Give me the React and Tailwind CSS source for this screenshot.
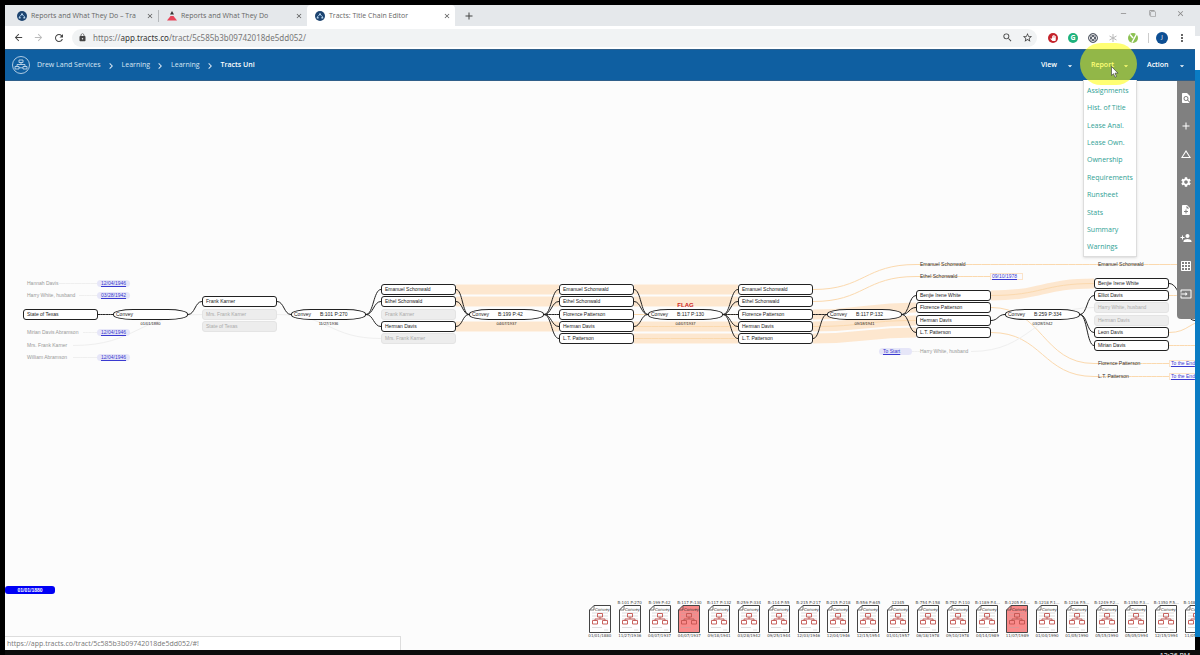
import React from "react";
import {
  MdAdd,
  MdArrowBack,
  MdArrowDropDown,
  MdArrowForward,
  MdChangeHistory,
  MdChevronRight,
  MdClose,
  MdFilterNone,
  MdFindInPage,
  MdGridOn,
  MdInput,
  MdLock,
  MdMoreVert,
  MdNoteAdd,
  MdPanTool,
  MdPersonAdd,
  MdRefresh,
  MdRemove,
  MdSearch,
  MdSettings,
  MdStarBorder,
} from "react-icons/md";

const crumbs = ["Drew Land Services", "Learning", "Learning"];

const reports = [
  "Assignments",
  "Hist. of Title",
  "Lease Anal.",
  "Lease Own.",
  "Ownership",
  "Requirements",
  "Runsheet",
  "Stats",
  "Summary",
  "Warnings",
];

const tools = [
  { name: "Find in document", Icon: MdFindInPage },
  { name: "Add", Icon: MdAdd },
  { name: "Triangle", Icon: MdChangeHistory },
  { name: "Settings", Icon: MdSettings },
  { name: "Add document", Icon: MdNoteAdd },
  { name: "Add person", Icon: MdPersonAdd },
  { name: "Grid", Icon: MdGridOn },
  { name: "Import", Icon: MdInput },
];

// Canvas geometry: owner columns, conveyance columns and the row pitch
const OWNER_X = [18, 197, 376, 554, 733, 911, 1089];
const DOC_X = [108, 286, 464, 643, 822, 1000];
const NODE_W = 75;
const row = (k) => Math.floor(233 + 12.4 * k);

const owners = [
  { col: 0, k: 0, name: "State of Texas" },
  { col: 1, k: -1, name: "Frank Karner" },
  { col: 1, k: 0, name: "Mrs. Frank Karner", past: true },
  { col: 1, k: 1, name: "State of Texas", past: true },
  { col: 2, k: -2, name: "Emanuel Schonwald" },
  { col: 2, k: -1, name: "Ethel Schonwald" },
  { col: 2, k: 0, name: "Frank Karner", past: true },
  { col: 2, k: 1, name: "Herman Davis" },
  { col: 2, k: 2, name: "Mrs. Frank Karner", past: true },
  { col: 3, k: -2, name: "Emanuel Schonwald" },
  { col: 3, k: -1, name: "Ethel Schonwald" },
  { col: 3, k: 0, name: "Florence Patterson" },
  { col: 3, k: 1, name: "Herman Davis" },
  { col: 3, k: 2, name: "L.T. Patterson" },
  { col: 4, k: -2, name: "Emanuel Schonwald" },
  { col: 4, k: -1, name: "Ethel Schonwald" },
  { col: 4, k: 0, name: "Florence Patterson" },
  { col: 4, k: 1, name: "Herman Davis" },
  { col: 4, k: 2, name: "L.T. Patterson" },
  { col: 5, k: -1.5, name: "Benjie Irene White" },
  { col: 5, k: -0.5, name: "Florence Patterson" },
  { col: 5, k: 0.5, name: "Herman Davis" },
  { col: 5, k: 1.5, name: "L.T. Patterson" },
  { col: 6, k: -2.5, name: "Benjie Irene White" },
  { col: 6, k: -1.5, name: "Elliot Davis" },
  { col: 6, k: -0.5, name: "Harry White, husband", past: true },
  { col: 6, k: 0.5, name: "Herman Davis", past: true },
  { col: 6, k: 1.5, name: "Leon Davis" },
  { col: 6, k: 2.5, name: "Mirian Davis" },
];

const docs = [
  { ref: "", date: "01/01/1880" },
  { ref: "B:101 P:270", date: "11/27/1936" },
  { ref: "B:199 P:42", date: "04/07/1937" },
  { ref: "B:117 P:130", date: "04/07/1937", flag: true },
  { ref: "B:117 P:132", date: "09/18/1941" },
  { ref: "B:259 P:334", date: "03/28/1942" },
];

const ghosts = [
  { x: 22, k: -2.5, name: "Hannah Davis", faint: true },
  { x: 22, k: -1.5, name: "Harry White, husband", faint: true },
  { x: 22, k: 1.5, name: "Mirian Davis Abramson", faint: true },
  { x: 22, k: 2.5, name: "Mrs. Frank Karner", faint: true },
  { x: 22, k: 3.5, name: "William Abramson", faint: true },
  { x: 915, k: -4, name: "Emanuel Schonwald" },
  { x: 915, k: -3, name: "Ethel Schonwald" },
  { x: 915, k: 3, name: "Harry White, husband", faint: true },
  { x: 1093, k: -4, name: "Emanuel Schonwald" },
  { x: 1093, k: 4, name: "Florence Patterson" },
  { x: 1093, k: 5, name: "L.T. Patterson" },
];

const jumps = [
  { x: 92, k: -2.5, text: "12/04/1946" },
  { x: 92, k: -1.5, text: "03/28/1942" },
  { x: 92, k: 1.5, text: "12/04/1946" },
  { x: 92, k: 3.5, text: "12/04/1946" },
  { x: 874, k: 3, text: "To Start" },
  { x: 985, k: -3, text: "09/10/1978", open: true },
  { x: 1164, k: 4, text: "To the End", open: true },
  { x: 1164, k: 5, text: "To the End", open: true },
];

// S-curve between two rows; the half pixel keeps level strokes crisp
const curve = (x1, k1, x2, k2) => {
  const mid = (x1 + x2) / 2;
  const y1 = row(k1) + 0.5;
  const y2 = row(k2) + 0.5;
  return `M${x1} ${y1}C${mid} ${y1} ${mid} ${y2} ${x2} ${y2}`;
};
const ownerRight = (col) => OWNER_X[col] + NODE_W;

// Rows that feed each conveyance and rows that come out of it
const links = [
  { from: [0], to: [-1] },
  { from: [-1], to: [-2, -1, 1] },
  { from: [-2, -1, 1], to: [-2, -1, 0, 1, 2] },
  { from: [-2, -1, 1], to: [-2, -1, 0, 1, 2] },
  { from: [0, 2], to: [-1.5, -0.5, 1.5] },
  { from: [0.5], to: [-1.5, 1.5, 2.5] },
];

const edges = links.flatMap(({ from, to }, i) => [
  ...from.map((k) => curve(ownerRight(i), k, DOC_X[i], 0)),
  ...to.map((k) => curve(DOC_X[i] + NODE_W, 0, OWNER_X[i + 1], k)),
]);

const bands = [
  curve(451, -2, 554, -2),
  curve(451, -1, 554, -1),
  curve(451, 1, 554, 1),
  curve(629, -2, 733, -2),
  curve(629, -1, 733, -1),
  curve(629, 1, 733, 1),
  curve(629, 2, 733, 2),
  curve(808, 0, 911, -0.5),
  curve(808, 1, 911, 0.5),
  curve(808, 2, 911, 1.5),
  curve(986, -1.5, 1089, -2.5),
];

const threads = [
  curve(629, 0, 733, 0),
  curve(629, 1, 733, 1),
  curve(629, 2, 733, 2),
  curve(808, -2, 911, -4),
  curve(808, -1, 911, -3),
  curve(808, 1, 911, 0.5),
  curve(911, -4, 1190, -4),
  curve(911, -3, 985, -3),
  curve(986, -1.5, 1089, -2.5),
  curve(986, -0.5, 1089, 4),
  curve(986, 1.5, 1089, 5),
  curve(1089, 4, 1164, 4),
  curve(1089, 5, 1164, 5),
  curve(1164, -1.5, 1190, -1.5),
  curve(1164, 1.5, 1204, 0.5),
  curve(1164, 2.5, 1190, 2.5),
];

const faintThreads = [
  curve(54, -2.5, 92, -2.5),
  curve(74, -1.5, 92, -1.5),
  curve(78, 1.5, 92, 1.5),
  curve(68, 2.5, 197, 0),
  curve(68, 3.5, 92, 3.5),
  curve(272, 0, 376, 2),
  curve(907, 3, 915, 3),
  curve(966, 3, 1089, -0.5),
];

const cards = [
  { ref: "", date: "01/01/1880" },
  { ref: "B:101 P:270", date: "11/27/1936" },
  { ref: "B:199 P:42", date: "04/07/1937" },
  { ref: "B:117 P:130", date: "04/07/1937", flag: true },
  { ref: "B:117 P:132", date: "09/18/1941" },
  { ref: "B:259 P:334", date: "03/28/1942" },
  { ref: "B:114 P:55", date: "09/25/1944" },
  { ref: "B:215 P:217", date: "12/03/1946" },
  { ref: "B:215 P:218", date: "12/04/1946" },
  { ref: "B:556 P:645", date: "12/15/1954" },
  { ref: "12345", date: "01/01/1957" },
  { ref: "B:754 P:158", date: "06/18/1978" },
  { ref: "B:752 P:110", date: "09/10/1978" },
  { ref: "B:1189 P.4...", date: "04/14/1989" },
  { ref: "B:1205 P.4...", date: "11/07/1989", flag: true },
  { ref: "B:1218 P.1...", date: "01/04/1990" },
  { ref: "B:1216 P.5...", date: "01/05/1990" },
  { ref: "B:1249 P.2...", date: "05/15/1990" },
  { ref: "B:1350 P.3...", date: "05/05/1994" },
  { ref: "B:1350 P.5...", date: "12/15/1994" },
  { ref: "B:1489 P.2...", date: "11/05/1998" },
];

const TractsFavicon = () => (
  <svg viewBox="0 0 10 10" className="size-[10px] shrink-0">
    <circle cx="5" cy="5" r="5" fill="#1d4470" />
    <path d="M2.500 7V5.500L5 3.500l2.500 2V7" stroke="#9fc4e6" fill="none" />
    <path d="M4 2.500h2V4H4zM1.800 6h1.800v1.500H1.800zM6.400 6h1.800v1.500H6.400z" fill="#b5d2ec" />
  </svg>
);

const PersonFavicon = () => (
  <svg viewBox="0 0 10 10" className="size-[10px] shrink-0">
    <path d="M5 0l2 3.500H3z" fill="#333" />
    <path d="M3.500 5h3L10 9.500H0z" fill="#e8455a" />
  </svg>
);

const BrowserTab = ({ icon, title, width, active }) => (
  <div
    className={`flex h-full min-w-0 items-center pr-[4px] pl-[8px] ${width} ${
      active ? "rounded-t bg-white" : ""
    }`}
  >
    {icon}
    <span className="ml-[4px] min-w-0 flex-1 pt-px text-[7px] whitespace-nowrap text-[#666]">
      {title}
    </span>
    <button type="button" aria-label="Close tab" className="ml-[4px] text-[#555]">
      <MdClose className="size-[8px]" />
    </button>
  </div>
);

const TabStrip = () => (
  <div className="flex h-[21px] shrink-0 items-center bg-[#e5e8eb]">
    <div className="w-[4px]" />
    <BrowserTab width="w-[149px]" icon={<TractsFavicon />} title="Reports and What They Do – Tra" />
    <div className="h-[12px] w-px bg-[#b5b8bb]" />
    <BrowserTab width="w-[148px]" icon={<PersonFavicon />} title="Reports and What They Do" />
    <BrowserTab active width="w-[148px]" icon={<TractsFavicon />} title="Tracts: Title Chain Editor" />
    <button type="button" aria-label="New tab" className="ml-[8px] text-[#444]">
      <MdAdd className="size-[12px]" />
    </button>
    <div className="ml-auto flex w-[76px] items-center justify-between pr-[10px] pb-1 text-[#888]">
      <button type="button" aria-label="Minimize"><MdRemove className="size-[9px]" /></button>
      <button type="button" aria-label="Restore"><MdFilterNone className="size-[7px] rotate-90" /></button>
      <button type="button" aria-label="Close"><MdClose className="size-[9px]" /></button>
    </div>
  </div>
);

const AddressBar = () => (
  <div className="flex h-[23px] shrink-0 items-center bg-white pl-[8px] text-[#444]">
    <div className="flex gap-[9px]">
      <button type="button" aria-label="Back"><MdArrowBack className="size-[11px]" /></button>
      <button type="button" aria-label="Forward" className="text-[#bbb]"><MdArrowForward className="size-[11px]" /></button>
      <button type="button" aria-label="Reload"><MdRefresh className="size-[12px]" /></button>
    </div>
    <div className="ml-[7px] flex h-[18px] flex-1 items-center rounded-full bg-[#f1f3f4] pr-[4px] pl-[6px]">
      <MdLock className="size-[9px]" />
      <p className="ml-[6px] flex-1 font-['Noto_Sans',sans-serif] text-[8px] leading-[12px] text-[#777]">
        https://<span className="text-[#333]">app.tracts.co</span>/tract/5c585b3b09742018de5dd052/
      </p>
      <button type="button" aria-label="Zoom"><MdSearch className="size-[11px]" /></button>
      <button type="button" aria-label="Bookmark" className="ml-[9px]"><MdStarBorder className="size-[11px]" /></button>
    </div>
    <div className="ml-[11px] flex items-center gap-[10px]">
      <span className="flex size-[10px] items-center justify-center rounded-full bg-[#c4232b] text-white">
        <MdPanTool className="size-[6px]" />
      </span>
      <span className="flex size-[10px] items-center justify-center rounded-full bg-[#1db27c] text-[7px] leading-none font-bold text-white">
        G
      </span>
      <svg viewBox="0 0 10 10" className="size-[10px]" fill="none" stroke="#555b66">
        <circle cx="5" cy="5" r="4.500" />
        <ellipse cx="5" cy="5" rx="4" ry="1.600" transform="rotate(45 5 5)" />
        <ellipse cx="5" cy="5" rx="4" ry="1.600" transform="rotate(-45 5 5)" />
      </svg>
      <svg viewBox="0 0 10 10" className="size-[10px]" stroke="#b9b9b9">
        <path d="M5 1v8M1.500 3l7 4M8.500 3l-7 4" />
      </svg>
      <svg viewBox="0 0 10 10" className="size-[10px]">
        <circle cx="5" cy="5" r="5" fill="#8cc152" />
        <path d="M2 1.500L5 5M8.500 1L4 9.500" stroke="#fff" strokeWidth="1.500" />
      </svg>
    </div>
    <div className="ml-[10px] h-[10px] w-px bg-[#ccc]" />
    <span className="ml-[7px] flex size-[12px] items-center justify-center rounded-full bg-[#0d4f93] text-[6px] text-white">
      J
    </span>
    <button type="button" aria-label="Menu" className="mr-[7px] ml-[8px]"><MdMoreVert className="size-[12px]" /></button>
  </div>
);

const Logo = () => (
  <svg viewBox="0 0 18 18" className="size-[18px]" fill="none" stroke="#d5e4f2">
    <circle cx="9" cy="9" r="8.500" strokeWidth=".8" />
    <path
      d="M7 4h4v2.500H7zM3 10.500h4V13H3zM11 10.500h4V13h-4zM9 6.500v2M5 10.500v-2h8v2M7 11.800h4"
      strokeWidth=".8"
    />
  </svg>
);

const MenuButton = ({ label, width, expanded }) => (
  <button
    type="button"
    aria-haspopup="menu"
    aria-expanded={expanded}
    className={`flex h-full items-center justify-between pt-px pr-[6px] pl-[8px] text-[7px] font-semibold text-white ${width}`}
  >
    {label}
    <MdArrowDropDown className="size-[10px]" />
  </button>
);

const AppHeader = () => (
  <header className="relative z-10 flex h-8 shrink-0 items-center border-y border-[#2f5f8a] bg-[#0f5fa1] pr-[2px] pl-[7px] text-[7px] text-[#d8e6f3]">
    <Logo />
    <nav aria-label="Breadcrumb" className="ml-[7px] flex items-center pt-px">
      {crumbs.map((crumb, i) => (
        <React.Fragment key={i}>
          <a href="#!">{crumb}</a>
          <MdChevronRight className="mr-[5px] ml-[4px] size-[12px]" />
        </React.Fragment>
      ))}
      <a href="#!" className="font-semibold text-white">Tracts Uni</a>
    </nav>
    <div className="ml-auto flex h-full gap-[2px]">
      <MenuButton label="View" width="w-[48px]" />
      <div className="relative h-full">
        <MenuButton label="Report" width="w-[54px]" expanded />
        <ul className="absolute top-full left-0 flex h-[177px] w-[54px] flex-col border border-t-0 border-[#ddd] bg-white pt-[2px] shadow-sm">
          {reports.map((name) => (
            <li key={name} className="flex flex-1 items-center pl-[3px]">
              <a href="#!" className="text-[7px] leading-[10px] text-[#2fa195]">{name}</a>
            </li>
          ))}
        </ul>
        {/* click highlight and pointer */}
        <div className="pointer-events-none absolute -top-[7px] -left-[3px] h-[42px] w-[57px] rounded-full bg-[#ffff00]/55" />
        <svg viewBox="0 0 8 12" className="pointer-events-none absolute top-[16px] left-[28px] h-[12px] w-[8px]">
          <path d="M.5.5v9l2-1.800 1.500 3.500 1.500-.7L4 7.200h3z" fill="#fff" stroke="#333" strokeWidth=".6" />
        </svg>
      </div>
      <MenuButton label="Action" width="w-[54px]" />
    </div>
  </header>
);

const OwnerNode = ({ owner }) => (
  <div
    className={`absolute flex h-[11px] w-[75px] items-center rounded-[3px] border pl-[3px] text-[5px] leading-[5px] whitespace-nowrap ${
      owner.past ? "border-[#e4e4e4] bg-[#ededed] text-[#aaa]" : "border-[#222] bg-white text-[#222]"
    }`}
    style={{ left: OWNER_X[owner.col], top: row(owner.k) - 5 }}
  >
    {owner.name}
  </div>
);

const DocNode = ({ doc, x }) => (
  <div className="absolute w-[75px]" style={{ left: x, top: row(0) - 5 }}>
    {doc.flag && (
      <p className="absolute bottom-full w-full text-center text-[6px] leading-[7px] font-bold text-[#c22]">
        FLAG
      </p>
    )}
    <div className="flex h-[11px] items-center rounded-[20px/5px] border border-[#222] bg-white pl-[2px] text-[5px] leading-[5px] whitespace-nowrap text-[#222]">
      <span className="w-[26px]">Convey</span>
      <span>{doc.ref}</span>
    </div>
    <p className="pt-[1px] text-center text-[4px] leading-[5px] text-[#222]">{doc.date}</p>
  </div>
);

const Diagram = () => (
  <div className="absolute inset-0 overflow-hidden">
    <svg className="absolute inset-0 h-full w-full" fill="none">
      <g stroke="#fde7cf" strokeWidth="10">
        {bands.map((d, i) => <path key={i} d={d} />)}
      </g>
      <g stroke="#fbd9ae">
        {threads.map((d, i) => <path key={i} d={d} />)}
      </g>
      <g stroke="#efefef">
        {faintThreads.map((d, i) => <path key={i} d={d} />)}
      </g>
      <g stroke="#222">
        {edges.map((d, i) => <path key={i} d={d} />)}
        <path d={curve(1164, -2.5, 1190, 0.5)} />
      </g>
    </svg>
    {owners.map((owner, i) => <OwnerNode key={i} owner={owner} />)}
    {docs.map((doc, i) => <DocNode key={i} doc={doc} x={DOC_X[i]} />)}
    {ghosts.map((g, i) => (
      <span
        key={i}
        className={`absolute text-[5px] leading-[6px] whitespace-nowrap ${g.faint ? "text-[#999]" : "text-[#333]"}`}
        style={{ left: g.x, top: row(g.k) - 3 }}
      >
        {g.name}
      </span>
    ))}
    {jumps.map((j, i) => (
      <a
        key={i}
        href="#!"
        className={`absolute w-[33px] text-[5px] whitespace-nowrap text-[#3a3ad0] underline ${
          j.open
            ? "border border-[#fbe3c8] bg-[#fafaff] pl-px leading-[5px]"
            : "rounded-full bg-[#e6e6f8] pl-[4px] leading-[7px]"
        }`}
        style={{ left: j.x, top: row(j.k) - 3 }}
      >
        {j.text}
      </a>
    ))}
  </div>
);

const DocCard = ({ card }) => (
  <li className="flex flex-col items-center font-['DejaVu_Sans',sans-serif] text-[4px] leading-[5px] whitespace-nowrap text-[#444]">
    <span className="h-[5px]">{card.ref}</span>
    <svg viewBox="0 0 22 28" className="h-[28px] w-[22px]" fill="none">
      <path
        d="M5 .5h16.500v27H.5V5z"
        fill={card.flag ? "#f98a8a" : "#fff"}
        stroke="#444"
      />
      <path d="M5 .5V5H.5" stroke="#444" strokeWidth=".7" />
      <text x="6" y="5.500" fontSize="4" fill="#333">Convey</text>
      <path d="M3 8h16M3 11h16M3 14h16M3 22.500h10M15 25h4" stroke="#aaa" strokeWidth=".4" />
      <path
        d="M8.500 8.500h5V12h-5zM3.500 15.500h5V19h-5zM13.500 15.500h5V19h-5zM11 12v2M6 15.500V14h10v1.500"
        stroke="#c2524e"
        strokeWidth=".9"
      />
    </svg>
    <span>{card.date}</span>
  </li>
);

const Toolbar = () => (
  <nav
    aria-label="Tools"
    className="absolute top-0 right-0 flex w-[18px] flex-col items-center rounded-bl bg-[#808080] pt-[3px] pb-[11px] text-white"
  >
    {tools.map(({ name, Icon }) => (
      <button key={name} type="button" aria-label={name} className="flex h-7 items-center">
        <Icon className="size-[12px]" />
      </button>
    ))}
  </nav>
);

const Canvas = () => (
  <main className="relative flex min-h-0 flex-1 flex-col overflow-hidden bg-[#fcfcfc] font-['Liberation_Sans',sans-serif]">
    <Diagram />
    <div className="relative mt-auto flex items-end">
      <div className="w-[580px] shrink-0">
        <div className="w-[50px] rounded-[3px] bg-[#0000f5] text-center text-[5px] leading-[8px] font-bold text-white">
          01/01/1880
        </div>
        <p className="mt-[42px] h-[14px] w-[396px] border-t border-r border-[#ddd] bg-white pl-[2px] font-['Open_Sans',sans-serif] text-[7px] leading-[13px] text-[#777]">
          https://app.tracts.co/tract/5c585b3b09742018de5dd052/#!
        </p>
      </div>
      <ul className="mb-[12px] grid w-[626px] shrink-0 grid-cols-[repeat(21,minmax(0,1fr))]">
        {cards.map((card, i) => <DocCard key={i} card={card} />)}
      </ul>
    </div>
    <Toolbar />
  </main>
);

export default function App() {
  return (
    <div className="flex h-screen flex-col overflow-hidden bg-black pt-[5px] pl-[5px] font-['Open_Sans',sans-serif]">
      <div className="flex min-h-0 flex-1">
        <div className="flex min-w-0 flex-1 flex-col">
          <TabStrip />
          <AddressBar />
          <AppHeader />
          <Canvas />
        </div>
        <div className="flex w-[5px] flex-col pb-[13px]">
          <div className="h-[31px] bg-[#e5e8eb]" />
          <div className="h-[34px] bg-white" />
          <div className="flex-1 bg-[#0a7cc4]" />
        </div>
      </div>
      <footer className="flex h-[5px] shrink-0 justify-end overflow-hidden bg-[#0c0c0c] pr-[10px] text-[7px] leading-[11px] text-white">
        12:26 PM
      </footer>
    </div>
  );
}
